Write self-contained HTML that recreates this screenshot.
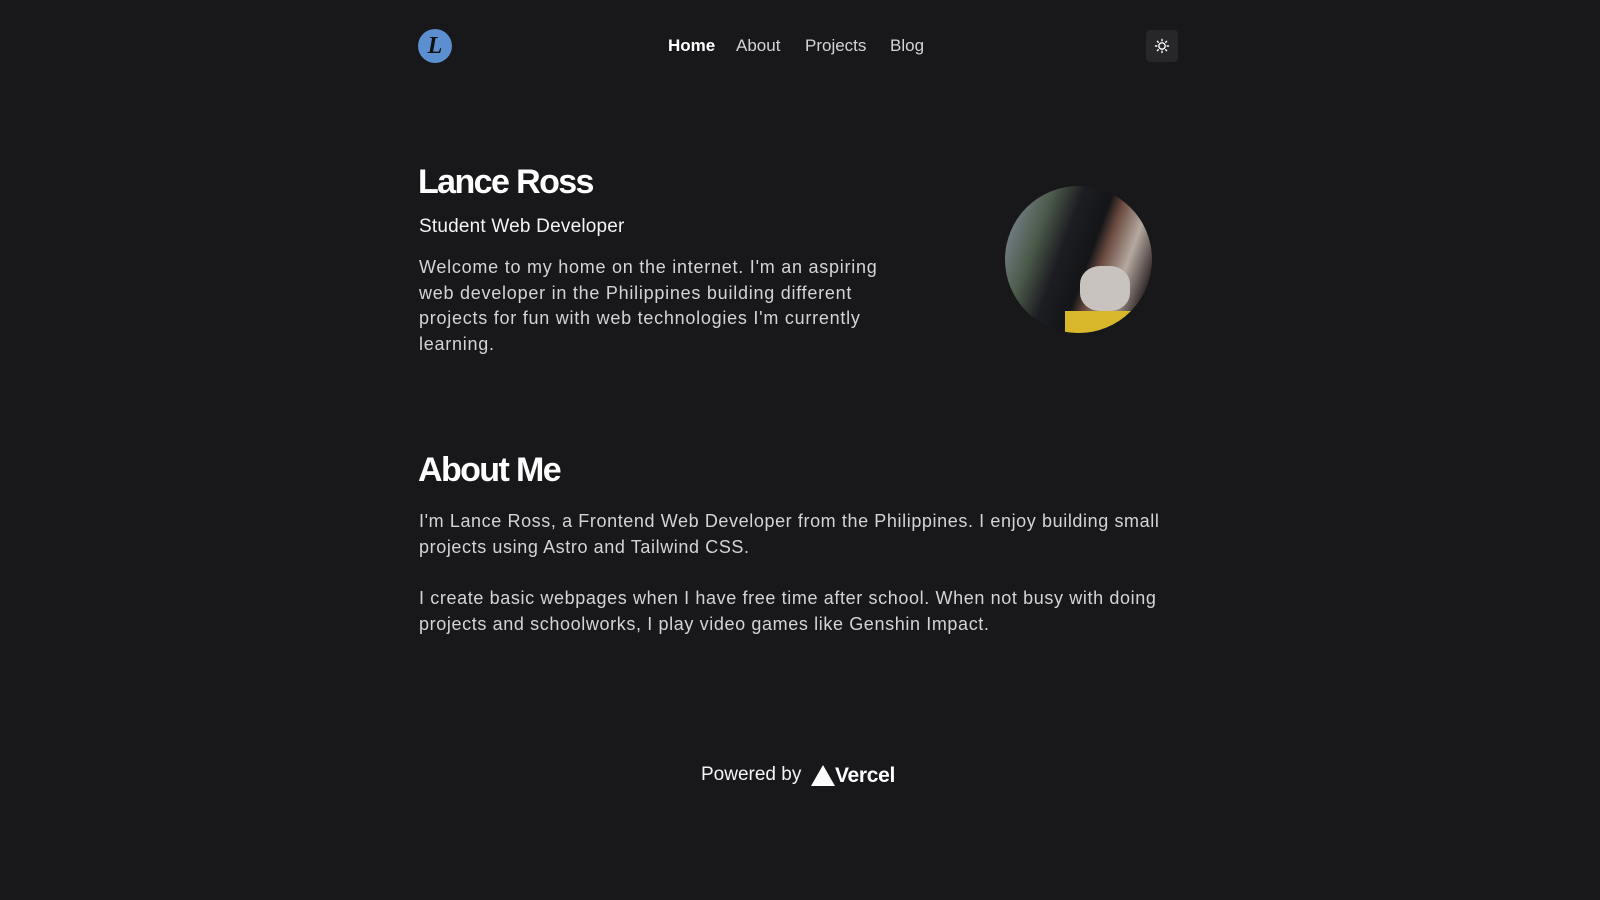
<!DOCTYPE html>
<html><head><meta charset="utf-8"><style>
*{margin:0;padding:0;box-sizing:border-box}
body{width:1600px;height:900px;background:#18181b;color:#e4e4e7;font-family:"Liberation Sans",sans-serif;position:relative;overflow:hidden}
.a{position:absolute;white-space:nowrap}
.logo{left:418px;top:29px;width:34px;height:34px;border-radius:50%;background:#5b8fd0;color:#111;font:italic bold 24px "Liberation Serif",serif;text-align:center;line-height:34px}
.nav{top:36px;font-size:17px;color:#d4d4d8}
.btn{left:1146px;top:30px;width:32px;height:32px;border-radius:4px;background:#27272a}
h1{font-size:34px;font-weight:bold;color:#fff;letter-spacing:-1.6px}
p{font-size:18px;line-height:25.5px;color:#d4d4d8;letter-spacing:0.55px}
</style></head><body>
<div class="a logo">L</div>
<div class="a nav" style="left:668px;color:#fff;font-weight:bold">Home</div>
<div class="a nav" style="left:736px">About</div>
<div class="a nav" style="left:805px">Projects</div>
<div class="a nav" style="left:890px">Blog</div>
<div class="a btn"><svg width="32" height="32" viewBox="0 0 32 32" fill="none" stroke="#fff" stroke-width="1.4" stroke-linecap="round"><circle cx="16" cy="16" r="3.2"/><path d="M16 9.5v1.3M16 21.2v1.3M9.5 16h1.3M21.2 16h1.3M11.4 11.4l.9.9M19.7 19.7l.9.9M11.4 20.6l.9-.9M19.7 12.3l.9-.9"/></svg></div>
<h1 class="a" style="left:418px;top:163px">Lance Ross</h1>
<div class="a" style="left:419px;top:216px;font-size:19px;color:#f4f4f5;letter-spacing:0.2px">Student Web Developer</div>
<p class="a" style="left:419px;top:255px;letter-spacing:0.75px">Welcome to my home on the internet. I'm an aspiring<br>web developer in the Philippines building different<br>projects for fun with web technologies I'm currently<br>learning.</p>
<div class="a" style="left:1005px;top:186px;width:147px;height:147px;border-radius:50%;overflow:hidden;background:linear-gradient(110deg,#8a93a8 0%,#4c5a4a 25%,#1c1d22 40%,#141518 55%,#6b4a40 62%,#b5a9a0 75%,#2a2224 90%)">
<div style="position:absolute;left:75px;top:80px;width:50px;height:45px;border-radius:40%;background:#c8c3be"></div>
<div style="position:absolute;left:60px;top:125px;width:70px;height:30px;background:#d8b82a"></div>
</div>
<h1 class="a" style="left:418px;top:451px">About Me</h1>
<p class="a" style="left:419px;top:509px;letter-spacing:0.6px">I'm Lance Ross, a Frontend Web Developer from the Philippines. I enjoy building small<br>projects using Astro and Tailwind CSS.</p>
<p class="a" style="left:419px;top:586px;letter-spacing:0.62px">I create basic webpages when I have free time after school. When not busy with doing<br>projects and schoolworks, I play video games like Genshin Impact.</p>
<div class="a" style="left:701px;top:764px;font-size:19px;color:#f4f4f5">Powered by</div>
<svg class="a" style="left:811px;top:765px" width="24" height="21" viewBox="0 0 24 21"><path d="M12 0L24 21H0z" fill="#fff"/></svg>
<div class="a" style="left:835px;top:764px;font-size:21px;font-weight:bold;color:#fff;letter-spacing:-0.3px">Vercel</div>
</body></html>
